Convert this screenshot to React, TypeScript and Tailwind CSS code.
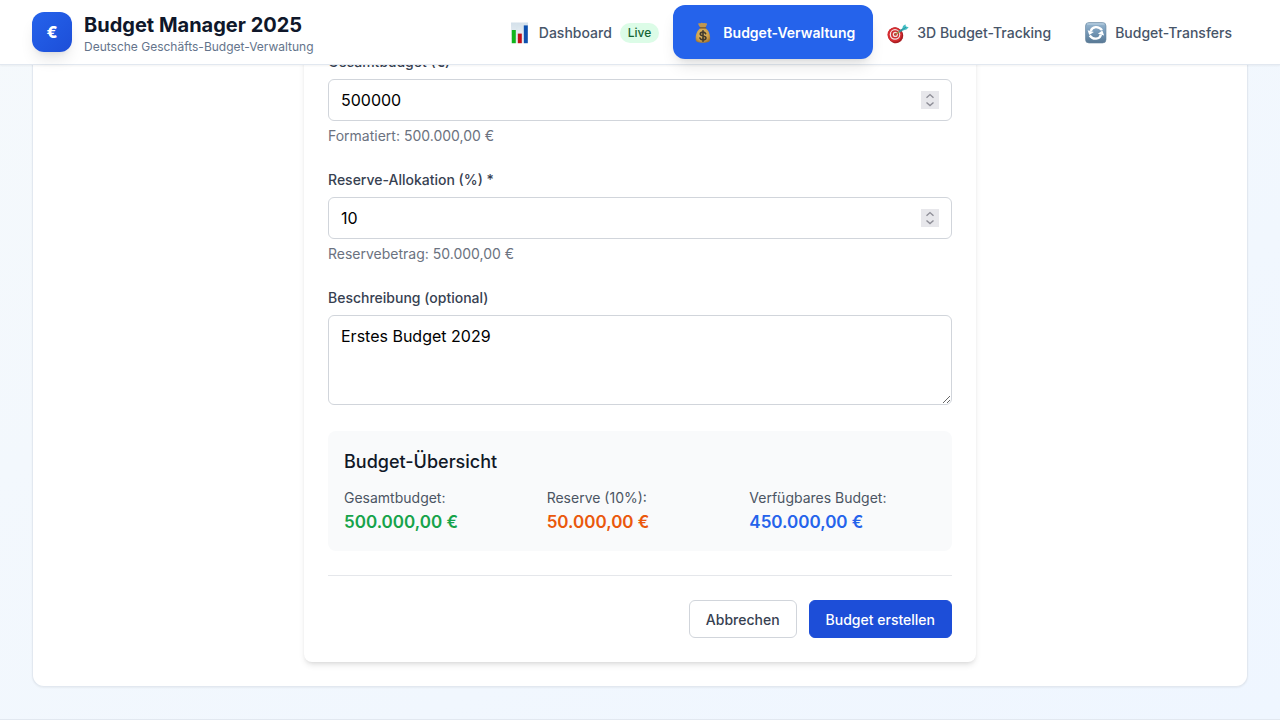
import { useState } from 'react';
import type { ReactNode } from 'react';

const formatEuro = (value: number) =>
  value.toLocaleString('de-DE', { minimumFractionDigits: 2, maximumFractionDigits: 2 }) + ' €';

function ChartIcon() {
  return (
    <svg viewBox="0 0 22 22" className="h-[22px] w-[22px] shrink-0" aria-hidden="true">
      <defs>
        <linearGradient id="chart-paper" x1="0" y1="0" x2="0" y2="1">
          <stop offset="0" stopColor="#d3e0ea" />
          <stop offset="1" stopColor="#f6f8fa" />
        </linearGradient>
      </defs>
      <rect x="2" y="0.5" width="17" height="21" fill="url(#chart-paper)" />
      <path d="M2 4.5h17M2 8.5h17M2 12.5h17M2 16.5h17M7.6 1v20M13.4 1v20" stroke="#dbe4ec" strokeWidth="0.5" />
      <rect x="2.8" y="8" width="4" height="13.2" fill="#10b51b" />
      <rect x="8.8" y="11.6" width="4" height="9.6" fill="#c3101a" />
      <rect x="14.8" y="3.4" width="4" height="17.8" fill="#0d50ae" />
    </svg>
  );
}

function MoneyBagIcon() {
  return (
    <svg viewBox="1 1 22 22" className="h-6 w-6 shrink-0" aria-hidden="true">
      <defs>
        <radialGradient id="bag" cx="0.45" cy="0.4" r="0.65">
          <stop offset="0" stopColor="#e6c272" />
          <stop offset="0.7" stopColor="#cc9d48" />
          <stop offset="1" stopColor="#9c7130" />
        </radialGradient>
      </defs>
      <path d="M7.6 3.3c1-.8 1.8.3 2.600-.4 1-.7 1.900.4 2.800 0 .9-.5 1.900.6 2.700.2.3 1.300-1 3-1.700 4.200H9.800C8.900 6 7.500 4.600 7.600 3.300z" fill="#c09650" />
      <path d="M9.800 7.500h4.300c3.400 2.400 4.700 6.500 4.400 10.300-.2 2.400-1.600 3.200-6.600 3.200s-6.400-.8-6.600-3.200C5 14 6.400 9.800 9.800 7.500z" fill="url(#bag)" />
      <path d="M9.500 7.300h5" stroke="#795522" strokeWidth="1.200" strokeLinecap="round" />
      <path d="M14.400 12.600c-.4-.9-1.200-1.400-2.400-1.400-1.500 0-2.500.7-2.500 1.800 0 2.600 5.200 1 5.200 3.500 0 1.100-1.100 1.800-2.700 1.800s-2.500-.6-2.800-1.700M12 10v9.500" fill="none" stroke="#423a2c" strokeWidth="1.500" strokeLinecap="round" />
    </svg>
  );
}

function TargetIcon() {
  return (
    <svg viewBox="0 0 22 22" className="h-[22px] w-[22px] shrink-0" aria-hidden="true">
      <ellipse cx="8.500" cy="13.300" rx="7.600" ry="8" transform="rotate(-25 8.500 13.300)" fill="#a91d22" />
      <circle cx="7.700" cy="12.600" r="7.200" fill="#d52c30" />
      <circle cx="8" cy="12.400" r="5.300" fill="#f3e6e4" />
      <circle cx="8.100" cy="12.400" r="4.100" fill="#cf2c30" />
      <circle cx="8.300" cy="12.400" r="2.600" fill="#f2dfdc" />
      <circle cx="8.400" cy="12.400" r="1.400" fill="#c52428" />
      <path d="M8.400 12.400l6-4" stroke="#9d8a42" strokeWidth="1.300" />
      <path d="M12.300 9.800l5-3.500" stroke="#2c8f9b" strokeWidth="2" />
      <path d="M15 7.600l1-3.500 2.400-1.800.5 2.300 2.800.7-2.200 2.300-3.700 1z" fill="#42bfc5" />
      <path d="M15.200 7.700l4-2.500" stroke="#24828e" strokeWidth="0.700" />
    </svg>
  );
}

function TransferIcon() {
  return (
    <svg viewBox="0 0 22 22" className="h-[22px] w-[22px] shrink-0" aria-hidden="true">
      <defs>
        <linearGradient id="transfer" x1="0" y1="0" x2="0" y2="1">
          <stop offset="0" stopColor="#9bb9d2" />
          <stop offset="0.45" stopColor="#7699b8" />
          <stop offset="1" stopColor="#587894" />
        </linearGradient>
      </defs>
      <rect x="0.500" y="0.500" width="20.500" height="20.500" rx="3.500" fill="url(#transfer)" stroke="#67849d" strokeWidth="0.600" />
      <path d="M2.500 2h16.500" stroke="#c4d7e6" strokeWidth="0.900" strokeLinecap="round" />
      <path d="M5.800 9C7 4.300 13.600 3.500 17 8.200" fill="none" stroke="#fff" strokeWidth="2.300" />
      <path d="M2.600 8.200l6.200 1.700-4.500 3.200z" fill="#fff" />
      <path d="M15.900 12.700c-1.200 4.700-7.800 5.500-11.200.8" fill="none" stroke="#fff" strokeWidth="2.300" />
      <path d="M19.100 13.500l-6.200-1.700 4.500-3.200z" fill="#fff" />
    </svg>
  );
}

function NavItem({ icon, label, badge }: { icon: ReactNode; label: string; badge?: string }) {
  return (
    <a href="#" className="flex items-center gap-2 rounded-xl px-4 pt-3.5 pb-3 text-sm font-medium text-[#475569]">
      {icon}
      {label}
      {badge && (
        <span className="rounded-full bg-[#dcfce7] px-2 py-0.5 text-xs font-medium text-[#166534]">{badge}</span>
      )}
    </a>
  );
}

type NumberFieldProps = {
  id: string;
  label: string;
  hint: string;
  value: number;
  step: number;
  onChange: (value: number) => void;
};

function NumberField({ id, label, hint, value, step, onChange }: NumberFieldProps) {
  return (
    <div>
      <label htmlFor={id} className="mb-1.5 block text-sm leading-[22px] font-medium text-[#374151]">
        {label}
      </label>
      <div className="flex items-center rounded-md border border-[#d1d5db] pr-3 focus-within:border-[#2563eb]">
        <input
          id={id}
          type="number"
          value={value}
          onChange={(event) => onChange(Number(event.target.value))}
          className="min-w-0 flex-1 appearance-none px-3 py-2 text-base text-black outline-none [-moz-appearance:textfield] [&::-webkit-inner-spin-button]:appearance-none"
        />
        <div className="flex w-[18px] flex-col bg-[#e7e7eb] text-[#8d8d96]">
          <button type="button" aria-label={`${label} erhöhen`} onClick={() => onChange(value + step)}>
            <svg viewBox="0 0 18 9" className="block h-[9px] w-[18px]" aria-hidden="true">
              <path d="M5.500 6.700L9 3.600l3.500 3.100" fill="none" stroke="currentColor" strokeWidth="1.400" />
            </svg>
          </button>
          <button type="button" aria-label={`${label} verringern`} onClick={() => onChange(value - step)}>
            <svg viewBox="0 0 18 9" className="block h-[9px] w-[18px]" aria-hidden="true">
              <path d="M5.500 2.500L9 5.600l3.500-3.100" fill="none" stroke="currentColor" strokeWidth="1.400" />
            </svg>
          </button>
        </div>
      </div>
      <p className="mt-1 text-sm leading-[22px] text-[#6b7280]">{hint}</p>
    </div>
  );
}

export default function App() {
  const [total, setTotal] = useState(500000);
  const [percent, setPercent] = useState(10);
  const [description, setDescription] = useState('Erstes Budget 2029');
  const reserve = (total * percent) / 100;

  const summary = [
    { label: 'Gesamtbudget:', value: total, color: 'text-[#16a34a]' },
    { label: `Reserve (${percent}%):`, value: reserve, color: 'text-[#ea580c]' },
    { label: 'Verfügbares Budget:', value: total - reserve, color: 'text-[#2563eb]' },
  ];

  return (
    <div className="min-h-screen bg-linear-to-br from-[#f5f9fc] to-[#eff6ff] font-['Inter','Liberation_Sans',sans-serif]">
      <header className="sticky top-0 z-10 border-b border-[#e2e8f0] bg-white shadow-xs">
        <div className="flex h-16 items-center justify-between px-8">
          <div className="flex items-center gap-3">
            <div className="flex h-10 w-10 items-center justify-center rounded-xl bg-linear-to-br from-[#2563eb] to-[#1d4ed8] text-base font-extrabold text-white shadow-lg">
              €
            </div>
            <div className="pt-0.5">
              <h1 className="text-xl leading-7 font-bold text-[#0f172a]">Budget Manager 2025</h1>
              <p className="text-xs text-[#64748b]">Deutsche Geschäfts-Budget-Verwaltung</p>
            </div>
          </div>
          <nav className="flex items-center gap-0.5 whitespace-nowrap" aria-label="Hauptnavigation">
            <NavItem icon={<ChartIcon />} label="Dashboard" badge="Live" />
            <a
              href="#"
              aria-current="page"
              className="-mx-1 flex h-[54px] items-center gap-2 rounded-xl bg-[#2563eb] px-[18px] pt-0.5 text-sm font-semibold text-white shadow-lg"
            >
              <MoneyBagIcon />
              Budget-Verwaltung
            </a>
            <NavItem icon={<TargetIcon />} label="3D Budget-Tracking" />
            <NavItem icon={<TransferIcon />} label="Budget-Transfers" />
          </nav>
        </div>
      </header>

      <main className="px-8 pb-8">
        <section className="rounded-b-xl border-x border-b border-[#e2e8f0] bg-white px-6 pb-6 shadow-xs">
          <div className="mx-auto max-w-2xl rounded-b-lg bg-white px-6 pb-6 shadow-md">
            <form className="-mt-3.5" onSubmit={(event) => event.preventDefault()}>
              <div className="flex flex-col gap-[22px]">
                <NumberField
                  id="total"
                  label="Gesamtbudget (€)"
                  hint={`Formatiert: ${formatEuro(total)}`}
                  value={total}
                  step={1000}
                  onChange={setTotal}
                />
                <NumberField
                  id="reserve"
                  label="Reserve-Allokation (%) *"
                  hint={`Reservebetrag: ${formatEuro(reserve)}`}
                  value={percent}
                  step={1}
                  onChange={setPercent}
                />
                <div>
                  <label
                    htmlFor="description"
                    className="mb-1.5 block text-sm leading-[22px] font-medium text-[#374151]"
                  >
                    Beschreibung (optional)
                  </label>
                  <textarea
                    id="description"
                    rows={3}
                    value={description}
                    onChange={(event) => setDescription(event.target.value)}
                    className="block w-full rounded-md border border-[#d1d5db] px-3 py-2 text-base text-black outline-none"
                  />
                </div>
              </div>

              <div className="mt-[26px] rounded-lg bg-[#f9fafb] px-4 pt-[17px] pb-[15px]">
                <h2 className="mb-3 text-lg font-medium text-[#111827]">Budget-Übersicht</h2>
                <dl className="grid grid-cols-3 gap-4">
                  {summary.map((item) => (
                    <div key={item.label}>
                      <dt className="text-sm text-[#4b5563]">{item.label}</dt>
                      <dd className={`text-[17px] leading-7 font-semibold ${item.color}`}>{formatEuro(item.value)}</dd>
                    </div>
                  ))}
                </dl>
              </div>

              <div className="mt-6 flex justify-end gap-3 border-t border-[#e5e7eb] pt-6">
                <button
                  type="button"
                  className="rounded-md border border-[#d1d5db] bg-white px-4 pt-[9px] pb-[7px] text-sm font-medium text-[#374151]"
                >
                  Abbrechen
                </button>
                <button
                  type="submit"
                  className="rounded-md border border-[#1d4ed8] bg-[#1d4ed8] px-4 pt-[9px] pb-[7px] text-sm font-medium text-white"
                >
                  Budget erstellen
                </button>
              </div>
            </form>
          </div>
        </section>
      </main>
      <footer className="border-t border-[#e2e8f0] bg-white" />
    </div>
  );
}
